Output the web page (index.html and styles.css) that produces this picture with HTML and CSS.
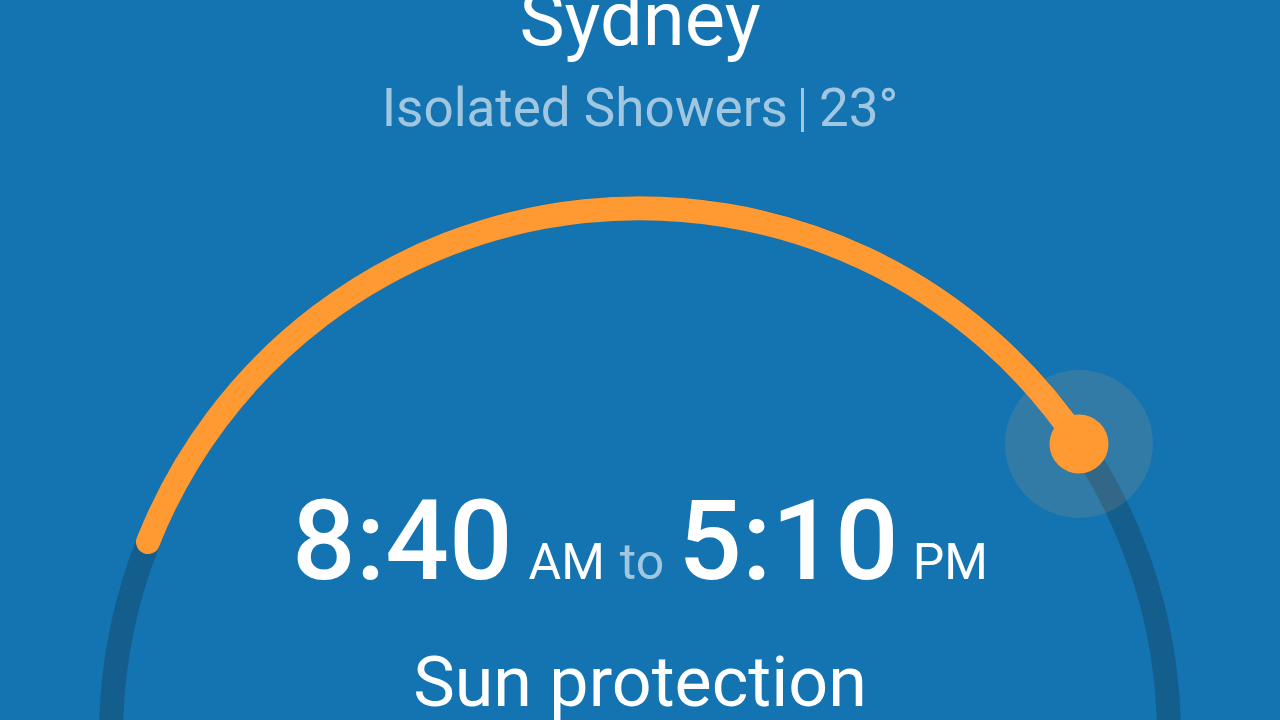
FILE: index.html
```html
<!DOCTYPE html>
<html lang="en">
<head>
<meta charset="utf-8">
<title>Sydney – Sun protection</title>
<link rel="stylesheet" href="styles.css">
</head>
<body>
<main class="screen">
  <svg class="dial" width="1280" height="720" viewBox="0 0 1280 720" aria-hidden="true">
    <circle class="track" cx="640" cy="737" r="529"/>
    <path class="progress" d="M 148 542 A 529 529 0 0 1 1080 444"/>
    <circle class="halo" cx="1079" cy="444" r="74"/>
    <circle class="knob" cx="1079" cy="444" r="29.5"/>
  </svg>
  <header class="place">
    <h1 class="city">Sydney</h1>
    <p class="conditions"><span>Isolated Showers</span><span class="sep"></span><span>23°</span></p>
  </header>
  <section class="window">
    <p class="times"><span class="big">8:40</span><span class="unit am">AM</span><span class="to">to</span><span class="big">5:10</span><span class="unit pm">PM</span></p>
    <p class="label">Sun protection</p>
  </section>
</main>
</body>
</html>
```
FILE: styles.css
```css
html, body {
  margin: 0;
  padding: 0;
  height: 100%;
  overflow: hidden;
}
body {
  background: #1474b2;
  font-family: Roboto, "Noto Sans", "Liberation Sans", sans-serif;
  color: #ffffff;
}
.screen {
  position: relative;
  width: 1280px;
  height: 720px;
  display: flex;
  flex-direction: column;
  align-items: center;
}
.dial {
  position: absolute;
  left: 0;
  top: 0;
}
.track {
  fill: none;
  stroke: #145e8e;
  stroke-width: 24;
}
.progress {
  fill: none;
  stroke: #ff9a33;
  stroke-width: 24;
  stroke-linecap: round;
}
.halo {
  fill: rgba(255, 170, 90, 0.13);
}
.knob {
  fill: #ff9a33;
}
.place, .window {
  position: relative;
  display: flex;
  flex-direction: column;
  align-items: center;
}
.city {
  margin: -19px 0 0;
  font-size: 76px;
  font-weight: 400;
  line-height: 76px;
}
.conditions {
  margin: 25px 0 0;
  font-size: 53px;
  line-height: 52px;
  color: rgba(255, 255, 255, 0.6);
  display: flex;
  align-items: center;
}
.sep {
  display: block;
  width: 3px;
  height: 44px;
  background: rgba(255, 255, 255, 0.6);
  margin: 4px 15px 0 13px;
}
.window {
  margin-top: 351px;
}
.times {
  margin: 0;
  display: flex;
  align-items: baseline;
  line-height: 112px;
}
.big {
  font-size: 112px;
  font-weight: 500;
  line-height: 112px;
}
.unit, .to {
  font-size: 50px;
  line-height: 50px;
}
.am {
  margin: 0 15px 0 16px;
}
.to {
  color: rgba(255, 255, 255, 0.6);
  margin-right: 14px;
}
.pm {
  margin-left: 14px;
}
.label {
  margin: 50px 0 0;
  font-size: 70px;
  line-height: 70px;
}
```
